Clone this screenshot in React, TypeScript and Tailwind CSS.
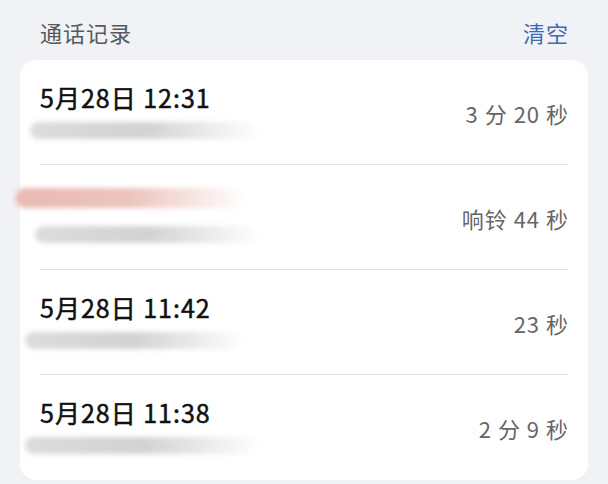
const calls = [
  { title: "5月28日 12:31", duration: "3 分 20 秒", bar: "ml-[-10px] w-[230px]" },
  { title: "", duration: "响铃 44 秒", bar: "ml-[-5px] w-[225px]" },
  { title: "5月28日 11:42", duration: "23 秒", bar: "ml-[-15px] w-[220px]" },
  { title: "5月28日 11:38", duration: "2 分 9 秒", bar: "ml-[-15px] w-[235px]" },
];

const GreyBar = ({ className }: { className: string }) => (
  <div
    className={`h-[17px] rounded-full bg-linear-to-r from-[#dcdcdc] via-[#d2d2d2] to-transparent blur-[2.5px] ${className}`}
  />
);

export default function App() {
  return (
    <div
      className="w-[608px] h-[484px] bg-[#f1f2f6] overflow-hidden"
      style={{ fontFamily: '"Noto Sans CJK SC", "Noto Sans", sans-serif' }}
    >
      <div className="flex items-center justify-between px-[40px] h-[60px] pt-[4px]">
        <span className="text-[22px] tracking-[1px] text-[#555a60]">通话记录</span>
        <span className="text-[22px] tracking-[1px] mr-[-1px] text-[#3a6cb3]">清空</span>
      </div>
      <div className="mx-[20px] bg-white rounded-[16px] px-[20px]">
        {calls.map((c, i) => (
          <div
            key={i}
            className={`flex items-center justify-between h-[105px] ${
              i < calls.length - 1 ? "border-b border-[#e2e2e4]" : ""
            }`}
          >
            <div className="flex flex-col pb-[4px]">
              {c.title ? (
                <>
                  <span className="text-[25px] leading-[30px] font-normal text-[#111] tracking-[1px] [-webkit-text-stroke:0.5px_#111]">
                    {c.title}
                  </span>
                  <GreyBar className={`mt-[10px] ${c.bar}`} />
                </>
              ) : (
                <>
                  <div className="ml-[-25px] w-[230px] h-[20px] rounded-full bg-linear-to-r from-[#e8bab2] via-[#edc4bd] to-transparent blur-[2.5px]" />
                  <GreyBar className={`mt-[18px] ${c.bar}`} />
                </>
              )}
            </div>
            <span className="text-[22px] tracking-[1px] mr-[-1px] text-[#666] pt-[2px]">{c.duration}</span>
          </div>
        ))}
      </div>
    </div>
  );
}
